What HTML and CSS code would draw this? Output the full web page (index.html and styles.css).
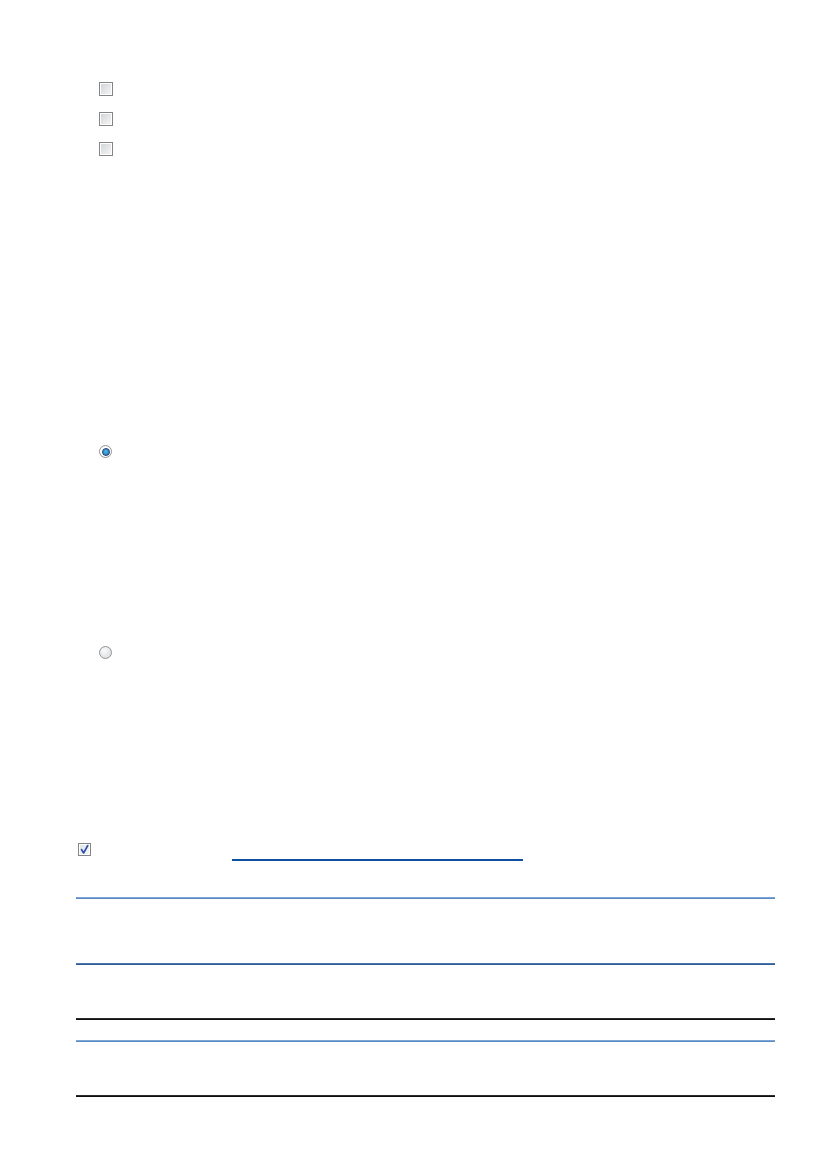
FILE: index.html
```html
<!DOCTYPE html>
<html lang="en">
<head>
    <meta charset="UTF-8">
    <meta name="viewport" content="width=device-width, initial-scale=1.0">
    <title>Form</title>
    <link rel="stylesheet" href="styles.css">
</head>
<body>
    <div class="page">
        <!-- Option checkboxes -->
        <div class="options">
            <span class="box"></span>
            <span class="box"></span>
            <span class="box"></span>
        </div>

        <!-- Choice radios -->
        <div class="choice first">
            <span class="radio selected"><span class="dot"></span></span>
        </div>
        <div class="choice second">
            <span class="radio"></span>
        </div>

        <!-- Agreement with signature field -->
        <div class="agree">
            <span class="box checked">
                <svg width="11" height="11" viewBox="0 0 11 11">
                    <path d="M2.5 5.5 L4.6 9 L8.8 1.5" fill="none" stroke="#2d4fa8" stroke-width="1.6" stroke-linecap="round" stroke-linejoin="round"/>
                </svg>
            </span>
            <span class="field"></span>
        </div>

        <!-- Section rules -->
        <div class="rules">
            <div class="rule blue r1"></div>
            <div class="rule navy r2"></div>
            <div class="rule black r3"></div>
            <div class="rule blue r4"></div>
            <div class="rule black r5"></div>
        </div>
    </div>
</body>
</html>
```

FILE: styles.css
```css
body {
    margin: 0;
    background-color: #ffffff;
    font-family: "Liberation Sans", Arial, sans-serif;
}
.page {
    width: 827px;
    min-height: 1169px;
}
.options {
    padding: 82px 0 0 99px;
    display: flex;
    flex-direction: column;
    gap: 16px;
}
.box {
    display: block;
    box-sizing: border-box;
    width: 14px;
    height: 14px;
    border: 1px solid #858585;
    box-shadow: inset 0 0 0 1px #ffffff;
    background: linear-gradient(135deg, #cfd3d8, #f7f7f7);
}
.choice {
    padding-left: 99px;
}
.choice.first {
    margin-top: 289px;
}
.choice.second {
    margin-top: 188px;
}
.radio {
    display: flex;
    align-items: center;
    justify-content: center;
    box-sizing: border-box;
    width: 13px;
    height: 13px;
    border-radius: 50%;
    border: 1px solid #939393;
    background: radial-gradient(circle at 40% 35%, #fbfbfb, #d5d7da);
}
.radio.selected {
    background: #ffffff;
}
.dot {
    box-sizing: border-box;
    width: 8px;
    height: 8px;
    border-radius: 50%;
    border: 1px solid #1b3d66;
    background: radial-gradient(circle at 45% 40%, #4fb3ea, #1a76bf);
}
.agree {
    display: flex;
    align-items: flex-start;
    margin-top: 184px;
    padding-left: 78px;
}
.box.checked {
    display: flex;
    align-items: center;
    justify-content: center;
    width: 13px;
    height: 13px;
    background: linear-gradient(135deg, #dfe2e7, #f8f8f8);
}
.field {
    width: 291px;
    height: 16px;
    margin-left: 141px;
    border-bottom: 2px solid #0f4fa0;
}
.rules {
    margin: 36px 0 0 76px;
    width: 699px;
}
.rule {
    height: 2px;
}
.rule.blue {
    background: linear-gradient(#8db2dd, #4a7fbf);
}
.rule.navy {
    background: linear-gradient(#5f86b6, #1c4f8f);
}
.rule.black {
    background: linear-gradient(#3a3a3a, #000000);
}
.r2 {
    margin-top: 64px;
}
.r3 {
    margin-top: 53px;
}
.r4 {
    margin-top: 20px;
}
.r5 {
    margin-top: 53px;
}
```
